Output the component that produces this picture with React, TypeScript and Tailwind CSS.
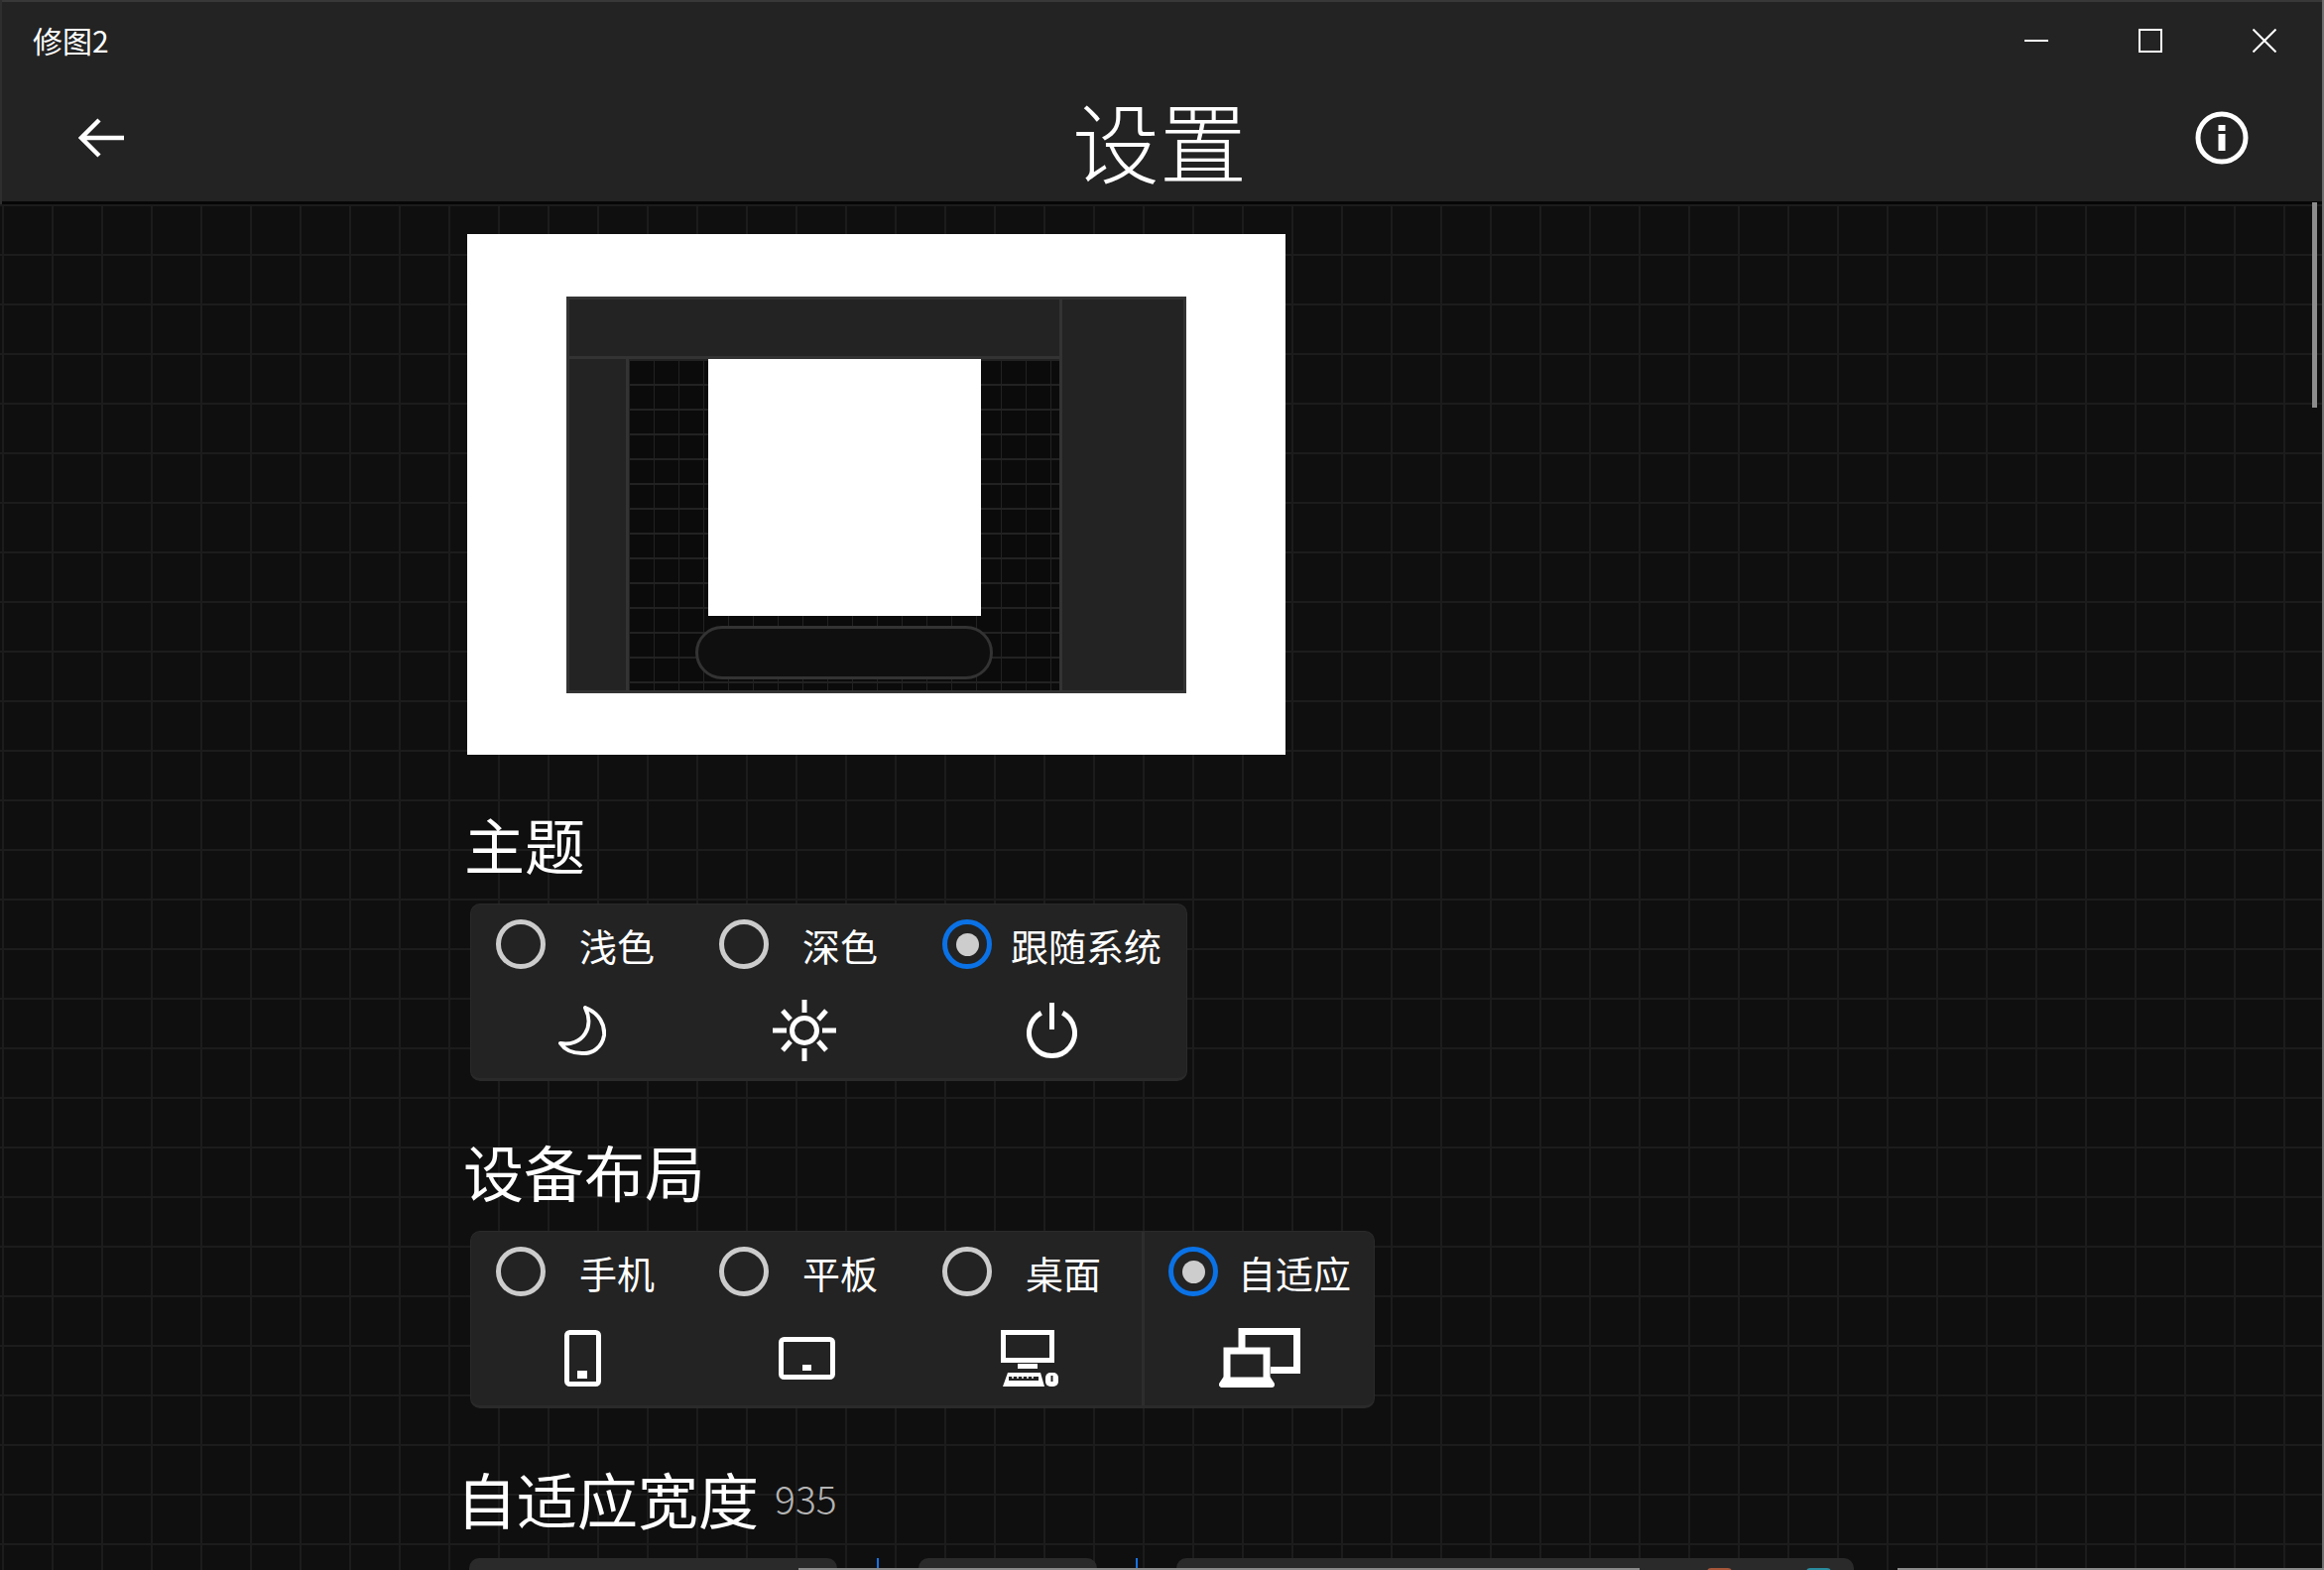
import type { ReactNode } from "react";

const Moon = () => (
  <svg width="48" height="50" viewBox="0 0 48 50" fill="none" stroke="white" strokeWidth="4" strokeLinejoin="round">
    <path d="M27 2C42 8 47 20 46 30C44 42 34 49 24 48C14 48 6 44 2 38C12 40 22 36 27 28C32 20 31 10 27 2Z" />
  </svg>
);

const Sun = () => (
  <svg width="64" height="62" viewBox="0 0 64 62" fill="none" stroke="white" strokeWidth="5">
    <circle cx="32" cy="31" r="12.5" />
    <path d="M32 0V13M32 49V62M0 31H14M50 31H64M10 11L18 20M54 11L46 20M10 51L18 42M54 51L46 42" />
  </svg>
);

const Power = () => (
  <svg width="51" height="56" viewBox="0 0 51 56" fill="none" stroke="white" strokeWidth="5">
    <path d="M14.7 10.2A23 23 0 1 0 36.3 10.2" />
    <path d="M25.5 0V27" />
  </svg>
);

const Phone = () => (
  <svg width="37" height="57" viewBox="0 0 37 57" fill="none" stroke="white" strokeWidth="5">
    <rect x="2.5" y="2.5" width="32" height="52" rx="3" />
    <rect x="13" y="41" width="10" height="8" fill="white" stroke="none" />
  </svg>
);

const Tablet = () => (
  <svg width="57" height="43" viewBox="0 0 57 43" fill="none" stroke="white" strokeWidth="5">
    <rect x="2.5" y="2.5" width="52" height="38" rx="3" />
    <rect x="24" y="28" width="9" height="6" fill="white" stroke="none" />
  </svg>
);

const Desktop = () => (
  <svg width="58" height="57" viewBox="0 0 58 57" fill="none">
    <rect x="2.5" y="2.5" width="49" height="28" stroke="white" strokeWidth="5" />
    <rect x="17" y="34" width="20" height="5" fill="white" />
    <path d="M2 57L7 43H40L44 57Z" fill="white" />
    <path d="M8 47H38V51H8Z" fill="#232323" />
    <path d="M12 46V49M17 46V49M22 46V49M27 46V49M32 46V49" stroke="white" strokeWidth="1.5" />
    <rect x="45" y="43" width="13" height="14" rx="5" fill="white" />
    <rect x="50.5" y="46" width="2" height="6" fill="#232323" />
  </svg>
);

const Adaptive = () => (
  <svg width="82" height="60" viewBox="0 0 82 60" fill="none" stroke="white">
    <path d="M23 20V3.5H78.5V42.5H52" strokeWidth="7" />
    <rect x="8" y="23" width="40" height="30" strokeWidth="7" />
    <path d="M7 51L3 57H53L49 51" strokeWidth="6" strokeLinejoin="round" />
  </svg>
);

function Radio({ checked }: { checked?: boolean }) {
  if (checked) {
    return (
      <div className="flex h-[50px] w-[50px] shrink-0 items-center justify-center rounded-full border-[5px] border-[#0a72e6]">
        <div className="h-[23px] w-[23px] rounded-full bg-[#cdcdcd]" />
      </div>
    );
  }
  return <div className="h-[50px] w-[50px] shrink-0 rounded-full border-[5px] border-[#cccccc]" />;
}

type Option = {
  label: string;
  icon: ReactNode;
  checked?: boolean;
  col: string;
  gap: string;
  iconBox: string;
};

const themes: Option[] = [
  { label: "浅色", icon: <Moon />, col: "w-[225px] pl-[25px]", gap: "ml-[34px]", iconBox: "w-[174px]" },
  { label: "深色", icon: <Sun />, col: "w-[225px] pl-[25px]", gap: "ml-[34px]", iconBox: "w-[172px]" },
  { label: "跟随系统", icon: <Power />, checked: true, col: "w-[248px] pl-[25px]", gap: "ml-[19px]", iconBox: "w-[220px]" },
];

const layouts: Option[] = [
  { label: "手机", icon: <Phone />, col: "w-[225px] pl-[25px]", gap: "ml-[34px]", iconBox: "w-[174px]" },
  { label: "平板", icon: <Tablet />, col: "w-[225px] pl-[25px]", gap: "ml-[34px]", iconBox: "w-[176px]" },
  { label: "桌面", icon: <Desktop />, col: "w-[226px] pl-[25px]", gap: "ml-[34px]", iconBox: "w-[176px]" },
  { label: "自适应", icon: <Adaptive />, checked: true, col: "w-[234px] border-l-[3px] border-[#2d2d2d] pl-[24px]", gap: "ml-[20px]", iconBox: "w-[183px]" },
];

function OptionCard({ options, width }: { options: Option[]; width: string }) {
  return (
    <div className={`ml-[3px] flex h-[179px] rounded-[10px] border border-b-[3px] border-[#2a2a2a] bg-[#232323] ${width}`}>
      {options.map((o) => (
        <div key={o.label} className={`flex flex-col pt-[15px] ${o.col}`}>
          <div className="flex items-center">
            <Radio checked={o.checked} />
            <span className={`pt-[1px] text-[38px] leading-none text-white ${o.gap}`}>{o.label}</span>
          </div>
          <div className={`mt-[31px] flex h-[62px] items-center justify-center ${o.iconBox}`}>{o.icon}</div>
        </div>
      ))}
    </div>
  );
}

function Heading({ children, after }: { children: string; after?: string }) {
  return (
    <div className="flex h-[90px] items-center pb-[11px]">
      <h2 className="text-[61px] leading-none font-normal text-white">{children}</h2>
      {after && <span className="ml-[16px] text-[39px] leading-none font-light text-[#b4b4b4]">{after}</span>}
    </div>
  );
}

export default function App() {
  return (
    <div className="relative flex h-[1583px] w-[2343px] flex-col overflow-hidden bg-[#0f0f0f] font-['Noto_Sans_CJK_SC','Noto_Sans',sans-serif]">
      <header className="h-[206px] shrink-0 border-b-[3px] border-[#060606] bg-[#232323]">
        <div className="flex h-[82px] items-center justify-between pl-[33px]">
          <span className="mt-[-2px] text-[30px] leading-none text-white">修图2</span>
          <div className="mr-[3px] flex">
            <div className="flex h-[82px] w-[115px] items-center justify-center">
              <div className="h-[2px] w-[24px] bg-white" />
            </div>
            <div className="flex h-[82px] w-[115px] items-center justify-center">
              <div className="h-[24px] w-[24px] border-2 border-white" />
            </div>
            <div className="flex h-[82px] w-[115px] items-center justify-center">
              <svg width="24" height="24" viewBox="0 0 24 24" stroke="white" strokeWidth="2">
                <path d="M0.5 0.5L23.5 23.5M23.5 0.5L0.5 23.5" />
              </svg>
            </div>
          </div>
        </div>
        <div className="flex h-[121px] items-start justify-between px-[79px]">
          <svg className="mt-[37px]" width="46" height="40" viewBox="0 0 46 40" fill="none" stroke="white" strokeWidth="4.5">
            <path d="M46 20H4M21 2L3 20L21 38" />
          </svg>
          <h1 className="mt-[8px] text-[88px] leading-[100px] font-light text-white">设置</h1>
          <svg className="mt-[30px] mr-[-3px]" width="54" height="54" viewBox="0 0 54 54" fill="none">
            <circle cx="27" cy="27" r="24" stroke="white" strokeWidth="5" />
            <rect x="23.5" y="14" width="7" height="6" fill="white" />
            <rect x="23.5" y="23" width="7" height="17" fill="white" />
          </svg>
        </div>
      </header>

      <main className="flex-1 overflow-hidden bg-[linear-gradient(to_right,#1c1c1c_2px,transparent_2px),linear-gradient(to_bottom,#1c1c1c_2px,transparent_2px)] bg-[size:50px_50px] bg-[position:2px_0] pt-[30px] pl-[471px]">
        <div className="flex h-[525px] w-[825px] bg-white pt-[63px] pl-[100px]">
          <div className="flex h-[400px] w-[625px] border-[3px] border-[#333333] bg-[#232323]">
            <div className="flex w-[497px] flex-col border-r-[3px] border-[#333333]">
              <div className="h-[60px] shrink-0 border-b-[3px] border-[#333333]" />
              <div className="flex flex-1">
                <div className="w-[60px] border-r-[3px] border-[#333333]" />
                <div className="flex flex-1 flex-col items-center gap-[10px] bg-[#0b0b0b] bg-[linear-gradient(to_right,#222222_1px,transparent_1px),linear-gradient(to_bottom,#222222_2px,transparent_2px)] bg-[size:25px_25px]">
                  <div className="h-[259px] w-[275px] bg-white" />
                  <div className="h-[54px] w-[300px] rounded-full border-[3px] border-[#333333] bg-[#0f0f0f]" />
                </div>
              </div>
            </div>
          </div>
        </div>

        <div className="mt-[50px] ml-[-3px]">
          <Heading>主题</Heading>
        </div>
        <div className="mt-[10px]">
          <OptionCard options={themes} width="w-[723px]" />
        </div>

        <div className="mt-[51px] ml-[-4px]">
          <Heading>设备布局</Heading>
        </div>
        <div className="mt-[10px]">
          <OptionCard options={layouts} width="w-[912px]" />
        </div>

        <div className="mt-[51px] ml-[-11px]">
          <Heading after="935">自适应宽度</Heading>
        </div>
        <div className="mt-[10px] ml-[2px] flex items-start">
          <div className="h-[40px] w-[371px] rounded-t-[10px] bg-[#2a2a2a]" />
          <div className="mx-[40px] h-[40px] w-[2px] bg-[#1473e6]" />
          <div className="h-[40px] w-[180px] rounded-t-[10px] bg-[#2a2a2a]" />
          <div className="mx-[39px] h-[40px] w-[2px] bg-[#1473e6]" />
          <div className="flex h-[40px] w-[683px] gap-[75px] rounded-t-[10px] bg-[#2a2a2a] pt-[10px] pl-[535px]">
            <div className="h-[4px] w-[25px] rounded-t-[4px] bg-[#a8563a]" />
            <div className="h-[4px] w-[25px] rounded-t-[4px] bg-[#2a8c9f]" />
          </div>
        </div>
      </main>

      {/* scrollbar and window frame sit on top of the content */}
      <div className="absolute top-[204px] left-[2331px] h-[207px] w-[5px] bg-[#8c8c8c]" />
      <div className="absolute top-0 left-0 h-[2px] w-full bg-[#383838]" />
      <div className="absolute top-0 left-0 h-[206px] w-[2px] bg-[#2e2e2e]" />
      <div className="absolute top-0 right-0 h-full w-[2px] bg-[#6f6f6f]" />
      <div className="absolute bottom-0 left-[805px] h-[2px] w-[848px] bg-[#8a8a8a]" />
      <div className="absolute right-0 bottom-0 h-[2px] w-[430px] bg-[#8a8a8a]" />
    </div>
  );
}
